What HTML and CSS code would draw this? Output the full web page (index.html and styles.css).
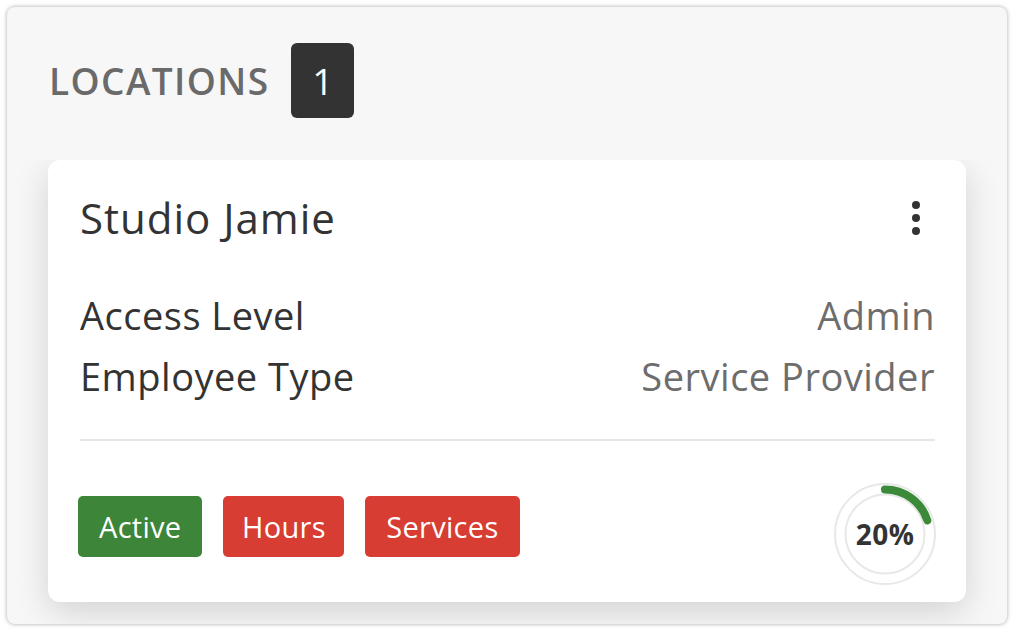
FILE: index.html
```html
<!DOCTYPE html>
<html lang="en">
<head>
<meta charset="utf-8">
<title>Locations</title>
<link rel="stylesheet" href="styles.css">
</head>
<body>
<div class="panel">
  <div class="panel-header">
    <h2 class="panel-title">LOCATIONS</h2>
    <span class="count-badge">1</span>
  </div>
  <div class="panel-list">
    <div class="card">
      <div class="card-head">
        <h3 class="card-title">Studio Jamie</h3>
        <button class="kebab" aria-label="More options">
          <span class="dot"></span><span class="dot"></span><span class="dot"></span>
        </button>
      </div>
      <div class="info-row">
        <span class="info-label">Access Level</span>
        <span class="info-value">Admin</span>
      </div>
      <div class="info-row">
        <span class="info-label">Employee Type</span>
        <span class="info-value">Service Provider</span>
      </div>
      <div class="divider"></div>
      <div class="card-foot">
        <div class="tags">
          <span class="tag tag-ok">Active</span>
          <span class="tag tag-bad">Hours</span>
          <span class="tag tag-bad tag-wide">Services</span>
        </div>
        <div class="progress">
          <svg class="progress-ring" width="104" height="104" viewBox="0 0 104 104">
            <circle cx="52" cy="52" r="50" fill="#fff" stroke="#e8e8e8" stroke-width="2"/>
            <circle cx="52" cy="52" r="39.5" fill="none" stroke="#e8e8e8" stroke-width="2"/>
            <circle cx="52" cy="52" r="44.5" fill="none" stroke="#3b8a3a" stroke-width="8" stroke-linecap="round" stroke-dasharray="55.9 300" transform="rotate(-90 52 52)"/>
          </svg>
          <span class="progress-label">20%</span>
        </div>
      </div>
    </div>
  </div>
</div>
</body>
</html>
```
FILE: styles.css
```css
* { box-sizing: border-box; }
html, body { margin: 0; padding: 0; background: #ffffff; }
body { font-family: "Open Sans", "Liberation Sans", sans-serif; color: #333333; }

.panel {
  margin: 7px;
  width: 1000px;
  height: 617px;
  background: #f7f7f7;
  border-radius: 8px;
  box-shadow: 0 0 4px rgba(0, 0, 0, 0.35);
  overflow: hidden;
  display: flex;
  flex-direction: column;
}

.panel-header {
  height: 153px;
  flex: none;
  display: flex;
  align-items: center;
  padding: 36px 0 42px 42px;
}
.panel-title {
  margin: 0;
  font-size: 37px;
  font-weight: 600;
  color: #6a6a6a;
  letter-spacing: 1.4px;
  line-height: 75px;
}
.count-badge {
  margin-left: 22px;
  width: 63px;
  height: 75px;
  border-radius: 6px;
  background: #333333;
  color: #ffffff;
  font-size: 37px;
  line-height: 75px;
  text-align: center;
}

.panel-list {
  flex: 1;
  overflow: hidden;
  padding: 0 41px;
}

.card {
  background: #ffffff;
  border-radius: 12px;
  box-shadow: 0 10px 34px rgba(0, 0, 0, 0.15);
  padding: 34px 31px 16px 32px;
}

.card-head {
  display: flex;
  justify-content: space-between;
  align-items: center;
  margin-bottom: 43px;
}
.card-title {
  margin: 0;
  font-size: 42px;
  font-weight: 400;
  letter-spacing: 1px;
  line-height: 48px;
  color: #333333;
}
.kebab {
  border: 0;
  background: none;
  padding: 0;
  margin-right: 15px;
  display: flex;
  flex-direction: column;
  gap: 5px;
}
.dot {
  width: 8px;
  height: 8px;
  border-radius: 50%;
  background: #333333;
}

.info-row {
  display: flex;
  justify-content: space-between;
  font-size: 38px;
  line-height: 61px;
  letter-spacing: 0.5px;
}
.info-label { color: #333333; }
.info-value { color: #6d6d6d; }

.divider {
  margin-top: 32px;
  height: 2px;
  background: #e6e6e6;
}

.card-foot {
  display: flex;
  justify-content: space-between;
  align-items: flex-start;
  padding-top: 41px;
}
.tags {
  display: flex;
  gap: 21px;
  margin-top: 14px;
  margin-left: -2px;
}
.tag {
  height: 61px;
  line-height: 61px;
  padding: 0 18.5px;
  border-radius: 5px;
  color: #ffffff;
  font-size: 29px;
  letter-spacing: 0.3px;
}
.tag-ok { background: #3c8539; padding: 0 21px; }
.tag-bad { background: #d73d33; }
.tag-wide { padding: 0 21px; }

.progress {
  width: 104px;
  height: 104px;
  margin-right: -2px;
  display: grid;
  place-items: center;
}
.progress-ring, .progress-label { grid-area: 1 / 1; }
.progress-label {
  font-size: 28px;
  font-weight: 700;
  letter-spacing: 0.5px;
  color: #333333;
}
```
